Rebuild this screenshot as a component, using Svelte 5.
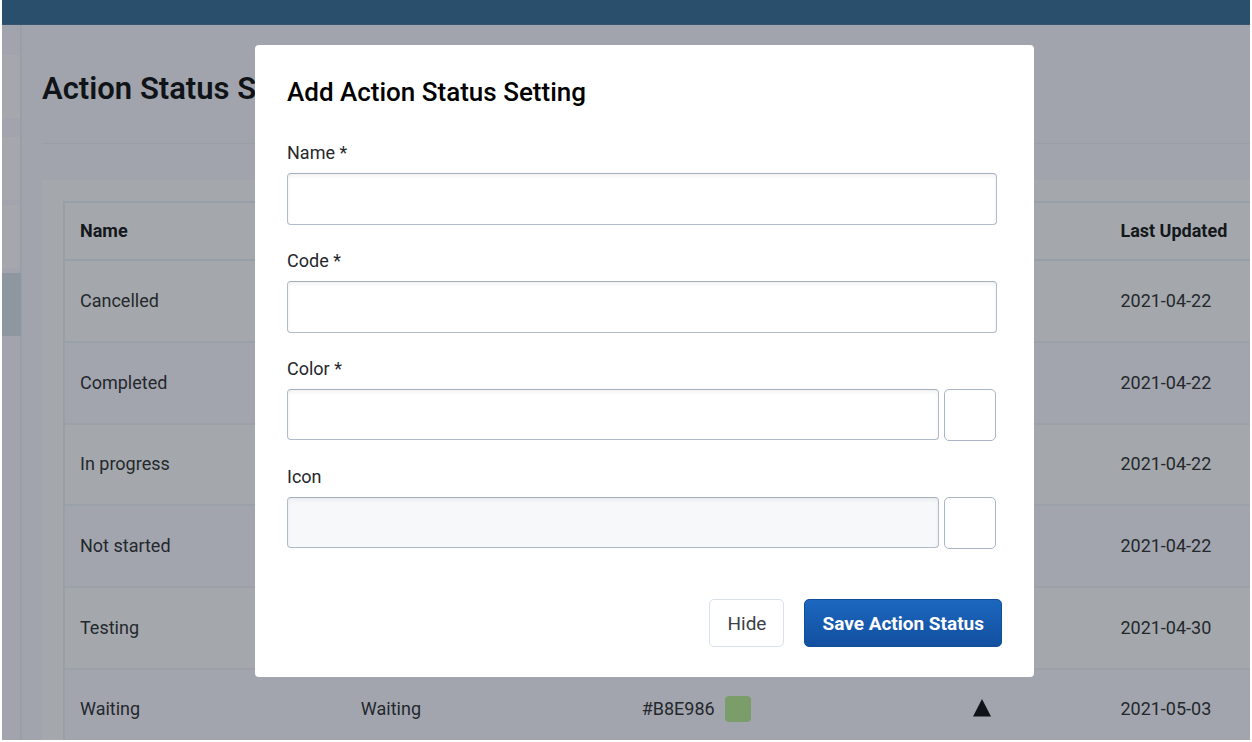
<script>
  const statuses = [
    { name: 'Cancelled', updated: '2021-04-22' },
    { name: 'Completed', updated: '2021-04-22' },
    { name: 'In progress', updated: '2021-04-22' },
    { name: 'Not started', updated: '2021-04-22' },
    { name: 'Testing', updated: '2021-04-30' },
    { name: 'Waiting', code: 'Waiting', color: '#B8E986', swatch: '#7b9d69', icon: true, updated: '2021-05-03' }
  ];
</script>

<div class="shell">
  <header class="topbar"></header>
  <div class="body">
    <nav class="sidebar" aria-label="Settings">
      <div class="item first"></div>
      <div class="item"></div>
      <div class="item"></div>
      <div class="item selected"></div>
    </nav>
    <main>
      <h1>Action Status Settings</h1>
      <div class="panel">
        <table>
          <colgroup>
            <col class="wide" /><col class="wide" /><col class="color" /><col class="icon" /><col />
          </colgroup>
          <thead>
            <tr><th>Name</th><th></th><th></th><th></th><th>Last Updated</th></tr>
          </thead>
          <tbody>
            {#each statuses as s}
              <tr>
                <td>{s.name}</td>
                <td>{s.code ?? ''}</td>
                <td>
                  {#if s.color}
                    <span class="colorcell">{s.color}<i class="chip" style:background={s.swatch}></i></span>
                  {/if}
                </td>
                <td class="center">
                  {#if s.icon}
                    <svg width="18" height="18" viewBox="0 0 18 18"><path d="M9 0L18 17.5H0Z" fill="#101418" /></svg>
                  {/if}
                </td>
                <td>{s.updated}</td>
              </tr>
            {/each}
          </tbody>
        </table>
      </div>
    </main>
  </div>
</div>

<div class="overlay">
  <div class="dialog" role="dialog" aria-modal="true" aria-labelledby="dialog-title">
    <h2 id="dialog-title">Add Action Status Setting</h2>
    <form onsubmit={(e) => e.preventDefault()}>
      <div class="fields">
        <div class="field">
          <label for="name">Name *</label>
          <input id="name" type="text" />
        </div>
        <div class="field">
          <label for="code">Code *</label>
          <input id="code" type="text" />
        </div>
        <div class="field">
          <label for="color">Color *</label>
          <div class="line">
            <input id="color" type="text" />
            <button type="button" class="picker" aria-label="Pick color"></button>
          </div>
        </div>
        <div class="field">
          <label for="icon">Icon</label>
          <div class="line">
            <input id="icon" type="text" readonly />
            <button type="button" class="picker" aria-label="Pick icon"></button>
          </div>
        </div>
      </div>
      <div class="actions">
        <button type="button" class="hide">Hide</button>
        <button type="submit" class="save">Save Action Status</button>
      </div>
    </form>
  </div>
</div>

<style>
  :global(body) {
    background: #fff;
    font-family: Roboto, sans-serif;
    font-size: 18px;
    color: #24282d;
  }
  * {
    box-sizing: border-box;
  }
  .shell {
    display: flex;
    flex-direction: column;
    height: calc(100vh - 2px);
    margin: 0 2px;
    overflow: hidden;
    background: #a1a4ac;
  }
  .topbar {
    flex: none;
    height: 25px;
    background: #2a4f6c;
    border-bottom: 1px solid #35546f;
  }
  .body {
    flex: 1;
    display: flex;
    min-height: 0;
  }
  .sidebar {
    flex: none;
    display: flex;
    flex-direction: column;
    gap: 5px;
    width: 20px;
    padding-top: 30px;
    border-right: 2px solid #979fa9;
  }
  .item {
    height: 63px;
    background: #a4a8ac;
  }
  .first {
    margin-bottom: 14px;
  }
  .selected {
    margin-right: -1px;
    background: #8e979f;
  }
  main {
    flex: 1;
    min-width: 0;
    padding-left: 20px;
  }
  h1 {
    margin: 0 0 36px;
    padding: 44px 0 34px;
    border-bottom: 1px solid #989fa8;
    font-size: 31px;
    line-height: 40px;
    font-weight: 600;
    color: #101418;
    white-space: nowrap;
  }
  .panel {
    padding: 21px 0 20px 21px;
    background: #a4a8ac;
  }
  table {
    width: 100%;
    table-layout: fixed;
    border-collapse: separate;
    border-spacing: 0;
    border: 2px solid #979fa8;
    border-right: 0;
  }
  .wide {
    width: 23.7%;
  }
  .color {
    width: 19.6%;
  }
  .icon {
    width: 20.8%;
  }
  th,
  td {
    padding: 0 0 2px 15px;
    text-align: left;
    white-space: nowrap;
  }
  th {
    height: 58px;
    border-bottom: 2px solid #979fa8;
    font-weight: 700;
    color: #14181c;
  }
  td {
    height: 82px;
    border-bottom: 2px solid #9ba1a8;
  }
  tbody tr:nth-child(3n) td {
    height: 81px;
  }
  tbody tr:nth-child(even) {
    background: #a2a5ad;
  }
  .center {
    padding: 0 0 6px;
    text-align: center;
  }
  .center svg {
    display: inline-block;
    vertical-align: middle;
  }
  .colorcell {
    display: flex;
    align-items: center;
    gap: 10px;
  }
  .chip {
    width: 26px;
    height: 26px;
    border-radius: 4px;
  }
  .overlay {
    position: fixed;
    inset: 0;
    padding: 45px 218px 0 255px;
  }
  .dialog {
    padding: 31px 32px 30px;
    background: #fff;
    border-radius: 4px;
  }
  h2 {
    margin: 0 0 35px;
    font-size: 26px;
    line-height: 32px;
    font-weight: 500;
    color: #000;
  }
  .fields {
    display: flex;
    flex-direction: column;
    gap: 26px;
    padding-right: 5px;
  }
  label {
    display: block;
    margin-bottom: 10px;
    line-height: 20px;
  }
  input {
    display: block;
    flex: 1;
    width: 100%;
    min-width: 0;
    height: 52px;
    padding: 0 14px;
    border: 1px solid #b0bbc9;
    border-top-color: #a3afbf;
    border-radius: 4px;
    background: #fff;
    box-shadow: inset 0 2px 4px #0000000f;
    font: inherit;
    outline: none;
  }
  input:read-only {
    background: #f7f8fa;
  }
  .line {
    display: flex;
    gap: 5px;
    padding-right: 1px;
  }
  .line input {
    height: 51px;
  }
  .picker {
    flex: none;
    width: 52px;
    height: 52px;
    padding: 0;
    border: 1px solid #a9b5c6;
    border-radius: 5px;
    background: #fff;
  }
  .actions {
    display: flex;
    justify-content: flex-end;
    gap: 20px;
    margin-top: 50px;
  }
  .hide,
  .save {
    height: 48px;
    padding: 0 17px;
    border-radius: 5px;
    font: inherit;
    font-size: 19px;
  }
  .hide {
    border: 1px solid #d9e1ea;
    background: #fff;
    color: #3c4045;
  }
  .save {
    border: 1px solid #114e9e;
    background: linear-gradient(#1c67bf, #124f9f);
    color: #fff;
    font-weight: 700;
  }
</style>
